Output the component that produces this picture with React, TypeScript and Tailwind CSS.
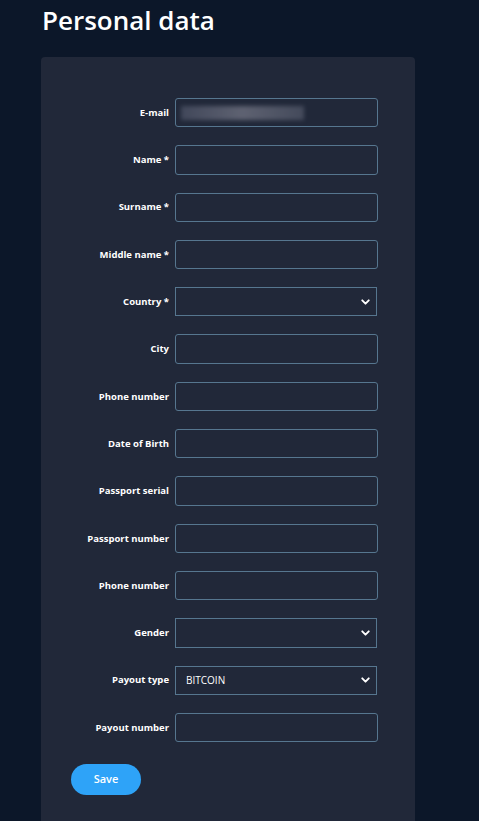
import { ChevronDown } from "lucide-react";

type Field = { label: string; kind?: "select"; value?: string; blur?: boolean };

const fields: Field[] = [
  { label: "E-mail", blur: true },
  { label: "Name *" },
  { label: "Surname *" },
  { label: "Middle name *" },
  { label: "Country *", kind: "select" },
  { label: "City" },
  { label: "Phone number" },
  { label: "Date of Birth" },
  { label: "Passport serial" },
  { label: "Passport number" },
  { label: "Phone number" },
  { label: "Gender", kind: "select" },
  { label: "Payout type", kind: "select", value: "BITCOIN" },
  { label: "Payout number" },
];

export default function App() {
  return (
    <div className="min-h-[821px] h-[821px] overflow-hidden bg-[#0c1729] font-['Open_Sans',sans-serif] text-white">
      <h1 className="pl-[42px] pt-[3px] text-[26px] font-semibold leading-[34px]">
        Personal data
      </h1>
      <div className="ml-[41px] mt-[20px] w-[374px] rounded-[4px] bg-[#212839] px-[30px] pt-[41px] pb-[40px]">
        <div className="flex flex-col gap-[18px]">
          {fields.map((f, i) => (
            <div key={i} className="flex items-center">
              <label className="w-[98px] text-right text-[9.5px] font-bold leading-none">
                {f.label}
              </label>
              {f.kind === "select" ? (
                <div className="relative ml-[6px] flex h-[29.3px] w-[202px] items-center border border-[#56768f] pl-[10px] text-[10px] font-medium">
                  {f.value}
                  <ChevronDown className="absolute right-[4px] top-1/2 h-[13px] w-[13px] -translate-y-1/2" strokeWidth={3.5} />
                </div>
              ) : (
                <div className="ml-[6px] flex h-[29.3px] w-[203px] items-center rounded-[3px] border border-[#56768f] pl-[5px]">
                  {f.blur && (
                    <div className="h-[14px] w-[123px] bg-gradient-to-r from-[#4a5063] via-[#6e7180] to-[#4d5364] opacity-80 blur-[2px]" />
                  )}
                </div>
              )}
            </div>
          ))}
        </div>
        <button className="mt-[22px] h-[31px] w-[70px] rounded-full bg-[#2ea3f8] text-[11px] font-semibold text-white">
          Save
        </button>
      </div>
    </div>
  );
}
